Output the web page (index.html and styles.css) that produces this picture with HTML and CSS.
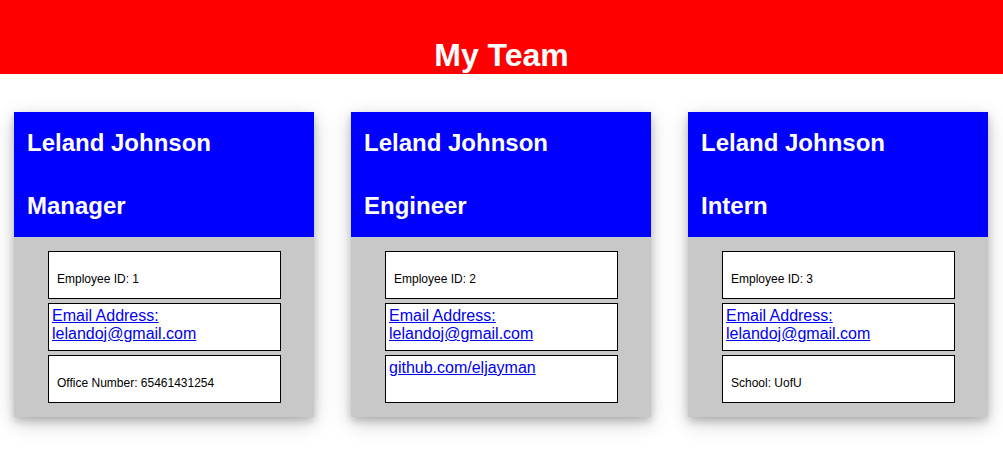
FILE: index.html
```html
<!DOCTYPE html>
<html>
<head>
<meta charset="utf-8">
<title>My Team</title>
<link rel="stylesheet" href="styles.css">
</head>
<body>
<header class="top">
  <h1 class="title">My Team</h1>
</header>
<main class="team">
  <section class="card">
    <div class="card-head">
      <h2 class="card-name">Leland Johnson</h2>
      <h2 class="card-role">Manager</h2>
    </div>
    <ul class="card-body">
      <li class="item"><p class="item-text">Employee ID: 1</p></li>
      <li class="item"><a class="item-link" href="mailto:lelandoj@gmail.com">Email Address: lelandoj@gmail.com</a></li>
      <li class="item"><p class="item-text">Office Number: 65461431254</p></li>
    </ul>
  </section>
  <section class="card">
    <div class="card-head">
      <h2 class="card-name">Leland Johnson</h2>
      <h2 class="card-role">Engineer</h2>
    </div>
    <ul class="card-body">
      <li class="item"><p class="item-text">Employee ID: 2</p></li>
      <li class="item"><a class="item-link" href="mailto:lelandoj@gmail.com">Email Address: lelandoj@gmail.com</a></li>
      <li class="item"><a class="item-link" href="#">github.com/eljayman</a></li>
    </ul>
  </section>
  <section class="card">
    <div class="card-head">
      <h2 class="card-name">Leland Johnson</h2>
      <h2 class="card-role">Intern</h2>
    </div>
    <ul class="card-body">
      <li class="item"><p class="item-text">Employee ID: 3</p></li>
      <li class="item"><a class="item-link" href="mailto:lelandoj@gmail.com">Email Address: lelandoj@gmail.com</a></li>
      <li class="item"><p class="item-text">School: UofU</p></li>
    </ul>
  </section>
</main>
</body>
</html>
```
FILE: styles.css
```css
html, body {
  margin: 0;
  padding: 0;
  background: #ffffff;
  font-family: "Liberation Sans", Arial, sans-serif;
  color: #000000;
}

.top {
  background: #ff0000;
  height: 74px;
  box-sizing: border-box;
  padding-top: 37px;
  text-align: center;
}

.title {
  margin: 0;
  font-size: 32px;
  font-weight: bold;
  color: #ffffff;
  line-height: normal;
}

.team {
  display: flex;
  gap: 37px;
  padding: 38px 0 40px 14px;
}

.card {
  width: 300px;
  flex: none;
  box-shadow: 0 4px 8px 0 rgba(0, 0, 0, 0.2), 0 6px 20px 0 rgba(0, 0, 0, 0.19);
}

.card-head {
  background: #0000ff;
  color: #ffffff;
  display: flex;
  flex-direction: column;
  padding: 17px 13px;
  gap: 35px;
}

.card-name,
.card-role {
  margin: 0;
  font-size: 24px;
  font-weight: bold;
  line-height: 28px;
}

.card-body {
  list-style: none;
  margin: 0;
  background: #c8c8c8;
  padding: 14px 33px 14px 34px;
  display: flex;
  flex-direction: column;
  gap: 4px;
}

.item {
  background: #ffffff;
  border: 1px solid #000000;
  height: 40px;
  padding: 3px;
  font-size: 16px;
  line-height: normal;
}

.item-text {
  margin: 16.6px 0 0 5px;
  font-size: 12px;
}

.item-link {
  color: #0000ee;
  text-decoration: underline;
}
```
